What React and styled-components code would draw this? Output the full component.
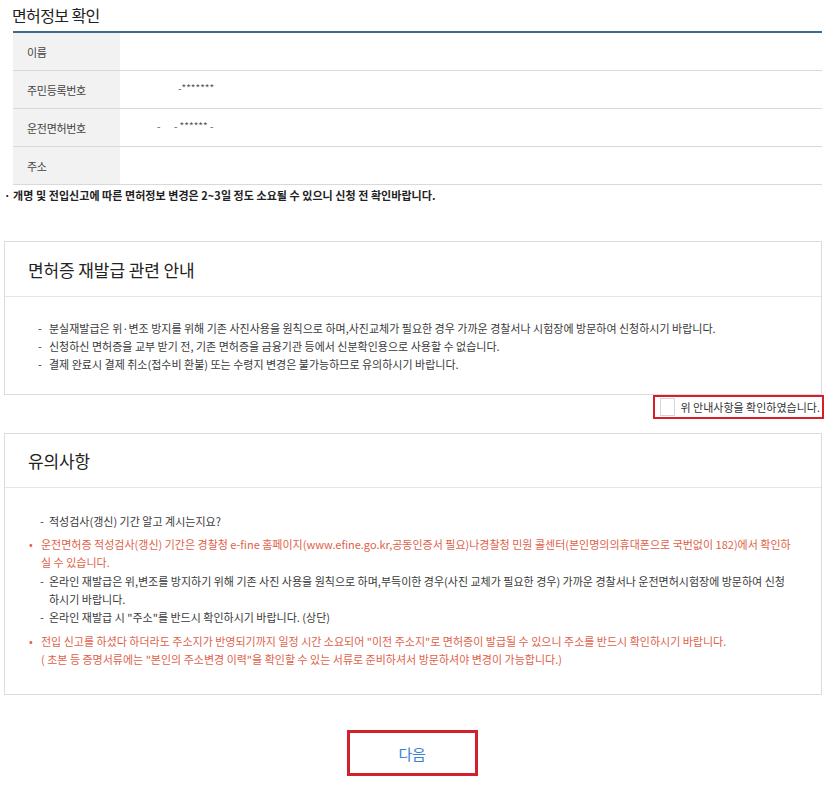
import React from "react";
import styled, { createGlobalStyle } from "styled-components";

const GlobalStyle = createGlobalStyle`
  html, body {
    margin: 0;
    padding: 0;
    background: #fff;
  }
  body {
    font-family: "Noto Sans CJK KR", "Noto Sans", sans-serif;
    color: #333;
  }
`;

const Page = styled.div`
  width: 818px;
  padding: 0 8px 10px 4px;
`;

const PageTitle = styled.h2`
  margin: 0 0 0 8px;
  height: 31px;
  font-size: 16px;
  font-weight: 400;
  line-height: 30px;
  letter-spacing: -0.6px;
  color: #222;
`;

const InfoTable = styled.div`
  margin-left: 9px;
  border-top: 2px solid #3d6a8e;
`;

const InfoRow = styled.div`
  display: flex;
  height: 37px;
  border-bottom: 1px solid #d9d9d9;
`;

const InfoLabel = styled.div`
  width: 107px;
  flex: none;
  display: flex;
  align-items: center;
  padding-left: 14px;
  box-sizing: border-box;
  background: #f2f2f2;
  font-size: 11px;
  letter-spacing: -0.3px;
  color: #444;
`;

const InfoValue = styled.div`
  display: flex;
  align-items: center;
  padding: 0 0 4px ${(p) => p.$indent || 37}px;
  font-size: 10px;
  color: #555;
  white-space: pre;
`;

const Note = styled.p`
  margin: 2px 0 0;
  font-size: 11px;
  font-weight: 700;
  letter-spacing: 0.05px;
  line-height: 17px;
  color: #222;
`;

const Box = styled.section`
  margin-top: ${(p) => p.$top}px;
  border: 1px solid #dcdcdc;
`;

const BoxHeader = styled.div`
  height: ${(p) => p.$height}px;
  display: flex;
  align-items: center;
  padding-left: 23px;
  border-bottom: 1px solid #e6e6e6;
  font-size: 17px;
  letter-spacing: -0.1px;
  color: #222;
`;

const BoxBody = styled.div`
  padding: ${(p) => p.$pad};
`;

const DashItem = styled.div`
  display: flex;
  padding-left: ${(p) => p.$left}px;
  font-size: 11px;
  line-height: 18px;
  letter-spacing: 0;
  color: #3a3a3a;
  &::before {
    content: "-";
    width: ${(p) => p.$dash}px;
    flex: none;
  }
`;

const RedItem = styled.div`
  display: flex;
  margin: ${(p) => p.$margin};
  padding-left: 24px;
  font-size: 11px;
  line-height: 18px;
  letter-spacing: 0;
  color: #e05f49;
  &::before {
    content: "${(p) => (p.$bullet ? "•" : "")}";
    width: 12px;
    flex: none;
  }
`;

const ConfirmRow = styled.div`
  display: flex;
  justify-content: flex-end;
  margin-right: -2px;
`;

const ConfirmLabel = styled.label`
  display: flex;
  align-items: center;
  gap: 5px;
  height: 18px;
  padding: 1px 2px 1px 5px;
  border: 2px solid #d3212c;
  font-size: 11px;
  letter-spacing: 0;
  color: #333;
`;

const CheckSquare = styled.span`
  width: 13px;
  height: 16px;
  border: 1px solid #d6d6d6;
  background: #fff;
`;

const ButtonRow = styled.div`
  display: flex;
  justify-content: center;
  margin-top: 35px;
  padding-right: 2px;
`;

const NextButton = styled.button`
  width: 131px;
  height: 46px;
  border: 3px solid #d3212c;
  background: #fff;
  font-family: "Noto Sans CJK KR", sans-serif;
  font-size: 15px;
  color: #3b7fd4;
  letter-spacing: -0.3px;
`;

const rows = [
  { label: "이름", value: "" },
  { label: "주민등록번호", value: "-*******", indent: 58 },
  { label: "운전면허번호", value: "-      - ****** -", indent: 37 },
  { label: "주소", value: "" },
];

const notices = [
  "분실재발급은 위·변조 방지를 위해 기존 사진사용을 원칙으로 하며,사진교체가 필요한 경우 가까운 경찰서나 시험장에 방문하여 신청하시기 바랍니다.",
  "신청하신 면허증을 교부 받기 전, 기존 면허증을 금융기관 등에서 신분확인용으로 사용할 수 없습니다.",
  "결제 완료시 결제 취소(접수비 환불) 또는 수령지 변경은 불가능하므로 유의하시기 바랍니다.",
];

export default function App() {
  return (
    <Page>
      <GlobalStyle />
      <PageTitle>면허정보 확인</PageTitle>
      <InfoTable>
        {rows.map((r) => (
          <InfoRow key={r.label}>
            <InfoLabel>{r.label}</InfoLabel>
            <InfoValue $indent={r.indent}>{r.value}</InfoValue>
          </InfoRow>
        ))}
      </InfoTable>
      <Note>· 개명 및 전입신고에 따른 면허정보 변경은 2~3일 정도 소요될 수 있으니 신청 전 확인바랍니다.</Note>

      <Box $top={37}>
        <BoxHeader $height={54}>면허증 재발급 관련 안내</BoxHeader>
        <BoxBody $pad="22px 0 21px">
          {notices.map((n) => (
            <DashItem key={n} $left={33} $dash={11}>
              {n}
            </DashItem>
          ))}
        </BoxBody>
      </Box>
      <ConfirmRow>
        <ConfirmLabel>
          <CheckSquare />위 안내사항을 확인하였습니다.
        </ConfirmLabel>
      </ConfirmRow>

      <Box $top={14}>
        <BoxHeader $height={53}>유의사항</BoxHeader>
        <BoxBody $pad="24px 0 26px">
          <DashItem $left={35} $dash={9}>적성검사(갱신) 기간 알고 계시는지요?</DashItem>
          <RedItem $bullet $margin="5px 0 1px">
            <span>
              운전면허증 적성검사(갱신) 기간은 경찰청 e-fine 홈페이지(www.efine.go.kr,공동인증서 필요)나경찰청 민원 콜센터(본인명의의휴대폰으로 국번없이 182)에서 확인하
              <br />실 수 있습니다.
            </span>
          </RedItem>
          <DashItem $left={35} $dash={9}>
            <span>
              온라인 재발급은 위,변조를 방지하기 위해 기존 사진 사용을 원칙으로 하며,부득이한 경우(사진 교체가 필요한 경우) 가까운 경찰서나 운전면허시험장에 방문하여 신청
              <br />하시기 바랍니다.
            </span>
          </DashItem>
          <DashItem $left={35} $dash={9}>온라인 재발급 시 "주소"를 반드시 확인하시기 바랍니다. (상단)</DashItem>
          <RedItem $bullet $margin="6px 0 0">
            전입 신고를 하셨다 하더라도 주소지가 반영되기까지 일정 시간 소요되어 "이전 주소지"로 면허증이 발급될 수 있으니 주소를 반드시 확인하시기 바랍니다.
          </RedItem>
          <RedItem $margin="0">
            ( 초본 등 증명서류에는 "본인의 주소변경 이력"을 확인할 수 있는 서류로 준비하셔서 방문하셔야 변경이 가능합니다.)
          </RedItem>
        </BoxBody>
      </Box>

      <ButtonRow>
        <NextButton>다음</NextButton>
      </ButtonRow>
    </Page>
  );
}
